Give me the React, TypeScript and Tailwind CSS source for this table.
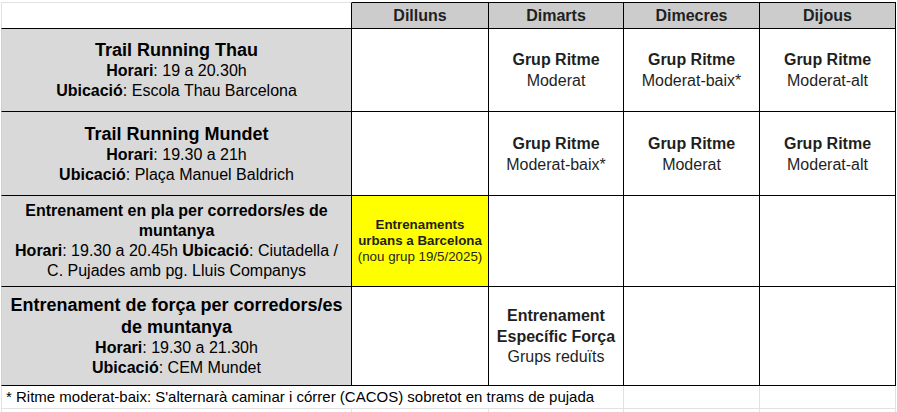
import React from "react";

const font = { fontFamily: '"Liberation Sans", Arial, sans-serif' };

function NameCell({ children, extra = "" }: { children: React.ReactNode; extra?: string }) {
  return (
    <div
      className={`flex flex-col items-center justify-center text-center bg-[#d9d9d9] text-black border-l border-l-[#d0d0d0] border-r border-r-black border-b border-b-black px-[3px] ${extra}`}
    >
      {children}
    </div>
  );
}

function DayCell({ children, extra = "" }: { children?: React.ReactNode; extra?: string }) {
  return (
    <div
      className={`flex flex-col items-center justify-center text-center text-[#1f1f1f] border-r border-r-black border-b border-b-black ${extra}`}
    >
      {children}
    </div>
  );
}

function Grup({ sub }: { sub: string }) {
  return (
    <>
      <div className="font-bold text-[16px] leading-[22px]">Grup Ritme</div>
      <div className="text-[16px] leading-[20px]">{sub}</div>
    </>
  );
}

export default function App() {
  return (
    <div className="w-[897px] h-[412px] bg-white overflow-hidden pt-[2px] pl-[1px]" style={font}>
      <div className="grid grid-cols-[351px_137px_135px_136px_136px] grid-rows-[27px_83px_84px_91px_99px_23px_4px]">
        {/* header */}
        <div className="border-t border-t-[#e2e2e2] border-l border-l-[#e2e2e2] border-r border-r-black border-b border-b-black" />
        {["Dilluns", "Dimarts", "Dimecres", "Dijous"].map((d) => (
          <div
            key={d}
            className="flex items-center justify-center bg-[#cccccc] border-t border-t-black border-r border-r-black border-b border-b-black font-bold text-[16px] text-[#1f1f1f]"
          >
            {d}
          </div>
        ))}

        {/* row 1 */}
        <NameCell>
          <div className="font-bold text-[18px] leading-[22px]">Trail Running Thau</div>
          <div className="text-[16px] leading-[20px]">
            <b>Horari</b>: 19 a 20.30h
          </div>
          <div className="text-[16px] leading-[20px]">
            <b>Ubicació</b>: Escola Thau Barcelona
          </div>
        </NameCell>
        <DayCell />
        <DayCell>
          <Grup sub="Moderat" />
        </DayCell>
        <DayCell>
          <Grup sub="Moderat-baix*" />
        </DayCell>
        <DayCell>
          <Grup sub="Moderat-alt" />
        </DayCell>

        {/* row 2 */}
        <NameCell>
          <div className="font-bold text-[18px] leading-[22px]">Trail Running Mundet</div>
          <div className="text-[16px] leading-[20px]">
            <b>Horari</b>: 19.30 a 21h
          </div>
          <div className="text-[16px] leading-[20px]">
            <b>Ubicació</b>: Plaça Manuel Baldrich
          </div>
        </NameCell>
        <DayCell />
        <DayCell>
          <Grup sub="Moderat-baix*" />
        </DayCell>
        <DayCell>
          <Grup sub="Moderat" />
        </DayCell>
        <DayCell>
          <Grup sub="Moderat-alt" />
        </DayCell>

        {/* row 3 */}
        <NameCell>
          <div className="font-bold text-[16px] leading-[20px]">Entrenament en pla per corredors/es de</div>
          <div className="font-bold text-[16px] leading-[20px]">muntanya</div>
          <div className="text-[16px] leading-[20px]">
            <b>Horari</b>: 19.30 a 20.45h <b>Ubicació</b>: Ciutadella /
          </div>
          <div className="text-[16px] leading-[20px]">C. Pujades amb pg. Lluis Companys</div>
        </NameCell>
        <DayCell extra="bg-[#ffff00] text-[13.33px] leading-[16px]">
          <div className="font-bold">Entrenaments</div>
          <div className="font-bold">urbans a Barcelona</div>
          <div>(nou grup 19/5/2025)</div>
        </DayCell>
        <DayCell />
        <DayCell />
        <DayCell />

        {/* row 4 */}
        <NameCell>
          <div className="font-bold text-[18px] leading-[22px]">Entrenament de força per corredors/es</div>
          <div className="font-bold text-[18px] leading-[22px]">de muntanya</div>
          <div className="text-[16px] leading-[20px]">
            <b>Horari</b>: 19.30 a 21.30h
          </div>
          <div className="text-[16px] leading-[20px]">
            <b>Ubicació</b>: CEM Mundet
          </div>
        </NameCell>
        <DayCell />
        <DayCell>
          <div className="font-bold text-[16px] leading-[22px]">Entrenament</div>
          <div className="font-bold text-[16px] leading-[20px]">Específic Força</div>
          <div className="text-[16px] leading-[20px]">Grups reduïts</div>
        </DayCell>
        <DayCell />
        <DayCell />

        {/* footer */}
        <div className="col-span-3 flex items-center pl-[4px] whitespace-nowrap text-[15px] text-black border-l border-l-[#e2e2e2] border-r border-r-[#e2e2e2] border-b border-b-[#e2e2e2]">
          * Ritme moderat-baix: S'alternarà caminar i córrer (CACOS) sobretot en trams de pujada
        </div>
        <div className="border-r border-r-[#e2e2e2] border-b border-b-[#e2e2e2]" />
        <div className="border-r border-r-[#e2e2e2] border-b border-b-[#e2e2e2]" />

        {/* partial row */}
        <div className="border-l border-l-[#e2e2e2] border-r border-r-[#e2e2e2]" />
        <div className="border-r border-r-[#e2e2e2]" />
        <div className="border-r border-r-[#e2e2e2]" />
        <div className="border-r border-r-[#e2e2e2]" />
        <div className="border-r border-r-[#e2e2e2]" />
      </div>
    </div>
  );
}
